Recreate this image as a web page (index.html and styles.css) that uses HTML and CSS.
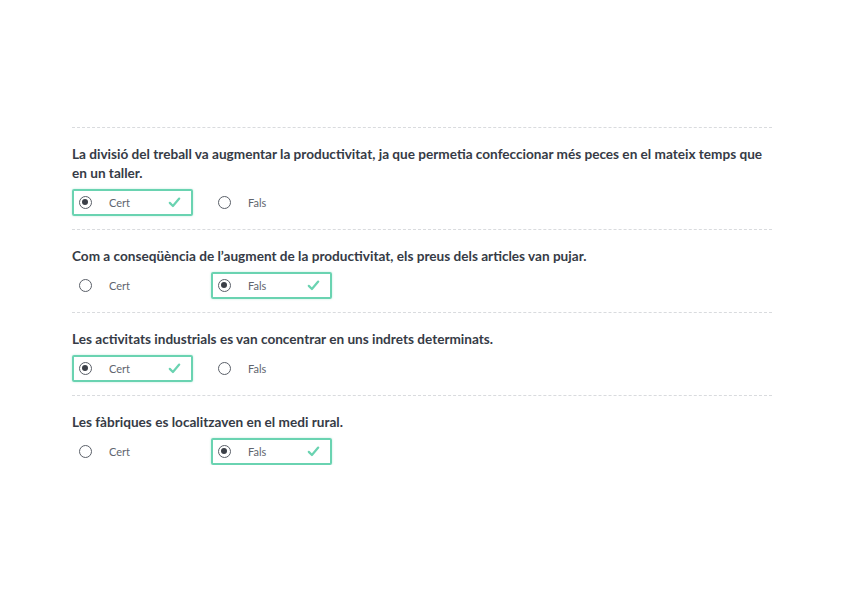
FILE: index.html
```html
<!doctype html>
<html>
    <head>
        <meta charset="UTF-8">
        <title>Qüestionari</title>
        <link rel="stylesheet" href="styles.css">
    </head>
    <body>
        <main class="quiz">
            <section class="question">
                <p class="statement">La divisió del treball va augmentar la productivitat, ja que permetia confeccionar més peces en el mateix temps que en un taller.</p>
                <div class="options">
                    <div class="option selected">
                        <span class="radio checked"></span>
                        <span class="label">Cert</span>
                        <svg class="tick" viewBox="0 0 16 14"><path d="M2 7.5 L6 11.5 L14 2"/></svg>
                    </div>
                    <div class="option">
                        <span class="radio"></span>
                        <span class="label">Fals</span>
                    </div>
                </div>
            </section>

            <section class="question">
                <p class="statement">Com a conseqüència de l’augment de la productivitat, els preus dels articles van pujar.</p>
                <div class="options">
                    <div class="option">
                        <span class="radio"></span>
                        <span class="label">Cert</span>
                    </div>
                    <div class="option selected">
                        <span class="radio checked"></span>
                        <span class="label">Fals</span>
                        <svg class="tick" viewBox="0 0 16 14"><path d="M2 7.5 L6 11.5 L14 2"/></svg>
                    </div>
                </div>
            </section>

            <section class="question">
                <p class="statement">Les activitats industrials es van concentrar en uns indrets determinats.</p>
                <div class="options">
                    <div class="option selected">
                        <span class="radio checked"></span>
                        <span class="label">Cert</span>
                        <svg class="tick" viewBox="0 0 16 14"><path d="M2 7.5 L6 11.5 L14 2"/></svg>
                    </div>
                    <div class="option">
                        <span class="radio"></span>
                        <span class="label">Fals</span>
                    </div>
                </div>
            </section>

            <section class="question last">
                <p class="statement">Les fàbriques es localitzaven en el medi rural.</p>
                <div class="options">
                    <div class="option">
                        <span class="radio"></span>
                        <span class="label">Cert</span>
                    </div>
                    <div class="option selected">
                        <span class="radio checked"></span>
                        <span class="label">Fals</span>
                        <svg class="tick" viewBox="0 0 16 14"><path d="M2 7.5 L6 11.5 L14 2"/></svg>
                    </div>
                </div>
            </section>
        </main>
    </body>
</html>
```

FILE: styles.css
```css
:root {
    --text: #363b46;
    --muted: #60656e;
    --green: #6ad3b1;
    --line: #d9dbde;
}

html, body {
    margin: 0;
    background-color: #fff;
}

* {
    font-family: Lato, "Open Sans", sans-serif;
    color: var(--text);
}

.quiz {
    width: 700px;
    margin: 0 0 0 72px;
    padding-top: 127px;
}

.question {
    border-top: 1px dashed var(--line);
    padding: 17px 0 13px;
}

.question.last {
    padding-bottom: 0;
}

.statement {
    margin: 0 0 6px;
    font-size: 13.6px;
    font-weight: 700;
    line-height: 19px;
}

.options {
    display: flex;
    gap: 18px;
}

.option {
    box-sizing: border-box;
    width: 121px;
    height: 27px;
    display: flex;
    align-items: center;
    padding: 0 0 0 5px;
    border: 2px solid transparent;
    border-radius: 2px;
}

.option.selected {
    border-color: var(--green);
    box-shadow: 0 0 2px rgba(106, 211, 177, 0.5);
}

.radio {
    box-sizing: border-box;
    width: 13px;
    height: 13px;
    border: 1.5px solid #5a5f68;
    border-radius: 50%;
    position: relative;
}

.radio.checked::after {
    content: "";
    position: absolute;
    left: 2px;
    top: 2px;
    width: 6px;
    height: 6px;
    border-radius: 50%;
    background: #3b3f47;
}

.label {
    margin-left: 17px;
    font-size: 11px;
    color: var(--muted);
    flex: 1;
}

.tick {
    width: 13px;
    height: 11px;
    margin-right: 10px;
}

.tick path {
    fill: none;
    stroke: var(--green);
    stroke-width: 2.8;
    stroke-linecap: round;
    stroke-linejoin: round;
}
```
